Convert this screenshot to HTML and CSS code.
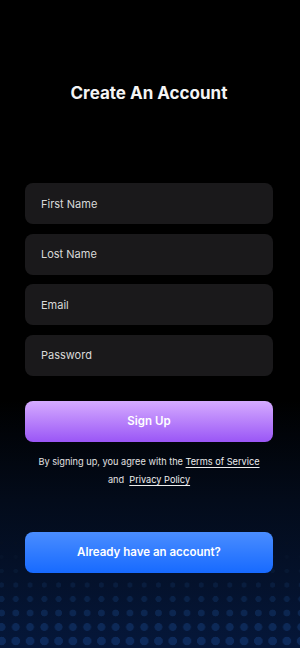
FILE: index.html
```html
<!DOCTYPE html>
<html lang="en">

<head>
    <meta charset="UTF-8">
    <meta name="viewport" content="width=device-width, initial-scale=1.0">
    <title>Create An Account</title>
    <link rel="stylesheet" href="styles.css">
</head>

<body>
    <main class="screen">
        <h1 class="title">Create An Account</h1>

        <form class="fields">
            <input type="text" class="field" placeholder="First Name">
            <input type="text" class="field" placeholder="Lost Name">
            <input type="email" class="field" placeholder="Email">
            <input type="password" class="field" placeholder="Password">
        </form>

        <button class="btn btn-signup">Sign Up</button>

        <p class="terms">
            By signing up, you agree with the <a href="#">Terms of Service</a><br>
            and&nbsp; <a href="#">Privacy Policy</a>
        </p>

        <button class="btn btn-login">Already have an account?</button>
    </main>
</body>

</html>
```

FILE: styles.css
```css
* {
    box-sizing: border-box;
}

html,
body {
    margin: 0;
    height: 100%;
}

body {
    font-family: Inter, "Noto Sans", sans-serif;
    color: #fff;
    background-color: #000;
    /* dot grid, dots get bigger toward the bottom */
    background-image:
        radial-gradient(circle, #0e2b5c 4px, transparent 4.6px),
        radial-gradient(circle, #0d2957 3.6px, transparent 4.2px),
        radial-gradient(circle, #0c2650 3.1px, transparent 3.7px),
        radial-gradient(circle, #0a2248 2.7px, transparent 3.3px),
        radial-gradient(circle, #091d3e 2.3px, transparent 2.9px),
        radial-gradient(circle, #071833 1.9px, transparent 2.5px),
        radial-gradient(circle, #06132a 1.6px, transparent 2.2px),
        radial-gradient(circle, #050f22 1.3px, transparent 1.9px),
        linear-gradient(to bottom, #000 0, #000 400px, #030b1a 500px, #05173a 648px);
    background-size:
        14.28px 14px, 14.28px 14px, 14.28px 14px, 14.28px 14px,
        14.28px 14px, 14.28px 14px, 14.28px 14px, 14.28px 14px,
        100% 100%;
    background-position:
        -5.6px 634px, -5.6px 620px, -5.6px 606px, -5.6px 592px,
        -5.6px 578px, -5.6px 564px, -5.6px 550px, -5.6px 536px,
        0 0;
    background-repeat:
        repeat-x, repeat-x, repeat-x, repeat-x,
        repeat-x, repeat-x, repeat-x, repeat-x,
        no-repeat;
}

.screen {
    display: flex;
    flex-direction: column;
    padding: 0 27px 0 25px;
    min-height: 648px;
}

.title {
    margin: 83px 0 0;
    font-size: 17px;
    line-height: 20px;
    font-weight: 700;
    text-align: center;
    color: #f4f4f4;
}

.fields {
    display: flex;
    flex-direction: column;
    gap: 9.5px;
    margin-top: 80px;
}

.field {
    height: 41px;
    width: 100%;
    padding: 0 16px;
    border: none;
    border-radius: 8px;
    background-color: #1a191b;
    color: #e6e6e6;
    font-family: Inter, "Noto Sans", sans-serif;
    font-size: 11px;
    outline: none;
}

.field::placeholder {
    color: #d9d9d9;
}

.btn {
    height: 41px;
    width: 100%;
    border: none;
    border-radius: 8px;
    font-family: Inter, "Noto Sans", sans-serif;
    font-size: 11.5px;
    font-weight: 600;
    color: #fff;
    cursor: pointer;
}

.btn-signup {
    margin-top: 25px;
    background: linear-gradient(to bottom, #d5abff, #9a56f6);
}

.btn-login {
    margin-top: 43px;
    background: linear-gradient(to bottom, #4a8dff, #176aff);
}

.terms {
    margin: 11px 0 0;
    font-size: 9.2px;
    line-height: 18px;
    text-align: center;
    color: #e2e2e2;
}

.terms a {
    color: #ededed;
    text-decoration: underline;
    text-underline-offset: 2px;
}
```
